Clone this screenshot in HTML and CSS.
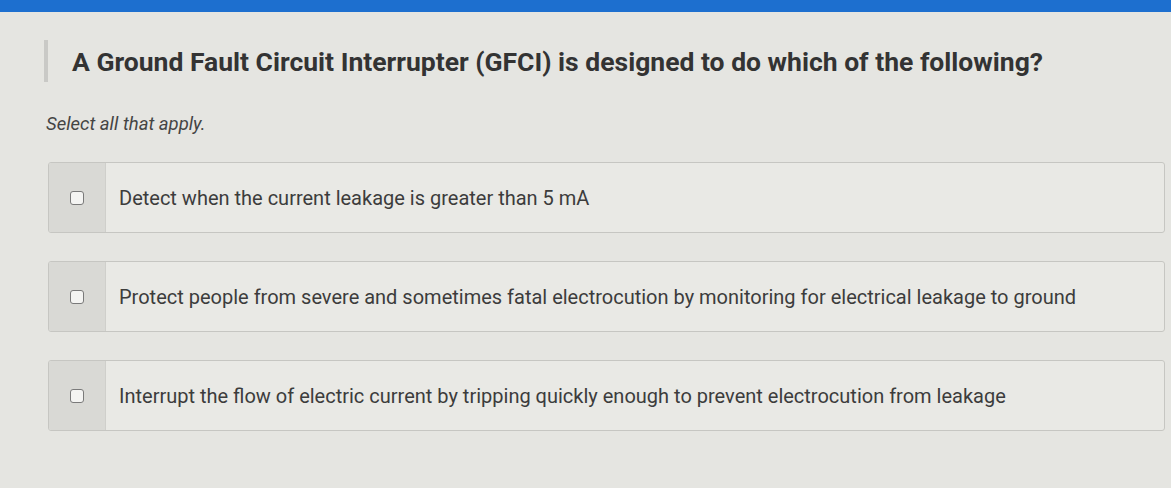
FILE: index.html
```html
<html lang="en">
<head>
    <title>GFCI Question</title>
    <link rel="stylesheet" href="styles.css">
</head>
<body>
    <div class="topbar"></div>
    <div class="question">
        <div class="stem">
            <span class="stem-mark"></span>
            <h1>A Ground Fault Circuit Interrupter (GFCI) is designed to do which of the following?</h1>
        </div>
        <p class="hint">Select all that apply.</p>

        <div class="options">
            <label class="option">
                <span class="check"><input type="checkbox"></span>
                <span class="text">Detect when the current leakage is greater than 5 mA</span>
            </label>
            <label class="option">
                <span class="check"><input type="checkbox"></span>
                <span class="text">Protect people from severe and sometimes fatal electrocution by monitoring for electrical leakage to ground</span>
            </label>
            <label class="option">
                <span class="check"><input type="checkbox"></span>
                <span class="text">Interrupt the flow of electric current by tripping quickly enough to prevent electrocution from leakage</span>
            </label>
        </div>
    </div>
</body>
</html>
```

FILE: styles.css
```css
body {
    margin: 0;
    background: #e5e5e1;
    font-family: Roboto, "Liberation Sans", sans-serif;
    color: #3a3a3a;
}
.topbar {
    height: 12px;
    background: #1d6fcf;
}
.question {
    padding: 28px 6px 0 44px;
}
.stem {
    display: flex;
    align-items: center;
    gap: 24px;
    height: 42px;
}
.stem-mark {
    width: 4px;
    height: 42px;
    background: #c9c9c6;
}
.stem h1 {
    margin: 0;
    font-size: 26.5px;
    font-weight: 700;
    color: #333;
}
.hint {
    margin: 31px 0 0 2px;
    font-size: 18.5px;
    font-style: italic;
    color: #444;
}
.options {
    display: flex;
    flex-direction: column;
    gap: 28px;
    margin-top: 27px;
    padding-left: 4px;
}
.option {
    display: flex;
    height: 69px;
    border: 1px solid #c6c6c2;
    border-radius: 3px;
    background: #e9e9e5;
    overflow: hidden;
}
.check {
    width: 56px;
    display: flex;
    align-items: center;
    justify-content: center;
    background: #d9d9d5;
    border-right: 1px solid #cfcfcb;
}
.check input {
    appearance: none;
    width: 14px;
    height: 14px;
    margin: 0;
    border: 1.5px solid #7a7a7a;
    border-radius: 3px;
    background: #f4f4f2;
}
.text {
    display: flex;
    align-items: center;
    padding-left: 13px;
    font-size: 20px;
    color: #3c3c3c;
}
```
